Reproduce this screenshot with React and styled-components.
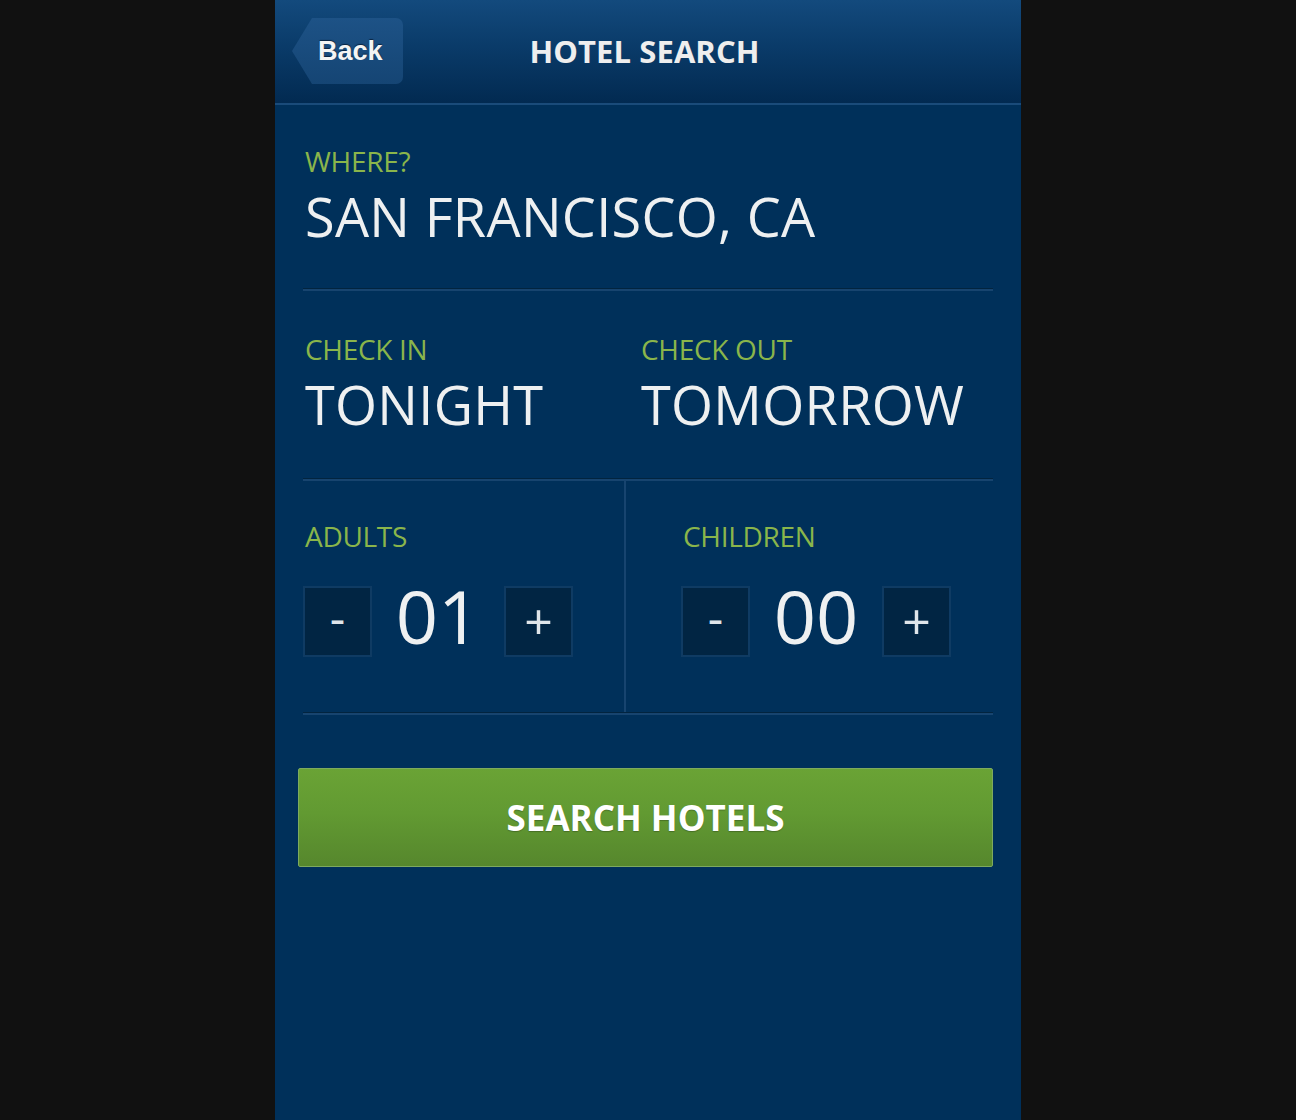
import React, { useState } from "react";
import styled, { createGlobalStyle } from "styled-components";

const GlobalStyle = createGlobalStyle`
  html, body {
    margin: 0;
    padding: 0;
    background: #111111;
  }
  * {
    box-sizing: border-box;
  }
`;

const Page = styled.div`
  display: flex;
  justify-content: center;
  min-height: 1120px;
  background: #111111;
`;

const Phone = styled.div`
  width: 746px;
  min-height: 1120px;
  background: #00305a;
  font-family: "Open Sans", "Noto Sans", sans-serif;
  color: #eef0f1;
`;

const Header = styled.header`
  display: grid;
  grid-template-columns: 1fr auto 1fr;
  align-items: center;
  height: 105px;
  padding: 0 17px 2px;
  background: linear-gradient(to bottom, #134a7d 0%, #0a3b69 45%, #022a51 100%);
  border-bottom: 2px solid #1a4b7a;
`;

const BackButton = styled.button`
  justify-self: start;
  width: 111px;
  height: 66px;
  margin-top: 1px;
  padding: 0 0 0 26px;
  border: none;
  border-radius: 0 7px 7px 0;
  clip-path: polygon(20px 0, 100% 0, 100% 100%, 20px 100%, 0 50%);
  background: linear-gradient(to bottom, #1d5286 0%, #184a7b 60%, #154574 100%);
  color: #f4f4f4;
  font-family: "Liberation Sans", Arial, sans-serif;
  font-weight: bold;
  font-size: 27px;
  text-align: left;
  text-shadow: 0 -1px 1px #0a2440;
  cursor: pointer;
`;

const Title = styled.h1`
  margin: 0 7px 0 0;
  font-size: 31px;
  font-weight: 700;
  letter-spacing: 0.1px;
  color: #eeeeee;
`;

const Content = styled.main`
  padding: 0 28px;
`;

const Section = styled.section`
  padding: ${(p) => p.$pad};
`;

const Divider = styled.hr`
  margin: 0;
  height: 0;
  border: none;
  border-top: 1px solid #02243f;
  border-bottom: 2px solid #17446f;
`;

const Label = styled.div`
  padding-left: 2px;
  font-size: 28px;
  line-height: 34px;
  color: #8ab54b;
  letter-spacing: -0.3px;
`;

const Value = styled.div`
  margin-top: 8px;
  padding-left: 2px;
  font-size: 54px;
  line-height: 60px;
  letter-spacing: 0.3px;
  color: #eef0f1;
  white-space: nowrap;
`;

const DateRow = styled.div`
  display: grid;
  grid-template-columns: 336px 1fr;
`;

const GuestRow = styled.div`
  display: grid;
  grid-template-columns: 323px 1fr;
`;

const GuestColumn = styled.div`
  padding: 38px 0 55px ${(p) => (p.$first ? "0" : "55px")};
  border-right: ${(p) => (p.$first ? "2px solid #17446f" : "none")};
`;

const Counter = styled.div`
  display: flex;
  align-items: flex-start;
  margin-top: 33px;
`;

const StepButton = styled.button`
  display: flex;
  align-items: center;
  justify-content: center;
  width: 69px;
  height: 71px;
  padding: 0 0 ${(p) => p.$shift}px;
  background: #012543;
  border: 2px solid #0f3b63;
  color: #dfe5ea;
  font-family: "Open Sans", "Noto Sans", sans-serif;
  font-size: ${(p) => p.$size}px;
  line-height: 1;
  cursor: pointer;
`;

const Count = styled.div`
  width: 132px;
  text-align: center;
  font-size: 74px;
  line-height: 60px;
  color: #eef0f1;
`;

const SearchButton = styled.button`
  display: flex;
  align-items: center;
  justify-content: center;
  width: 695px;
  height: 99px;
  margin: 53px 0 0 -5px;
  border: 1px solid #7eaa5e;
  border-radius: 2px;
  background: linear-gradient(to bottom, #6aa335 0%, #629a32 45%, #56872d 100%);
  color: #ffffff;
  font-family: "Open Sans", "Noto Sans", sans-serif;
  font-size: 35px;
  font-weight: 700;
  text-shadow: 0 1px 1px rgba(0, 0, 0, 0.25);
  cursor: pointer;
`;

const pad = (n) => String(n).padStart(2, "0");

const GuestCounter = ({ label, value, onChange, first }) => (
  <GuestColumn $first={first}>
    <Label>{label}</Label>
    <Counter>
      <StepButton $size={48} $shift={10} onClick={() => onChange(Math.max(0, value - 1))}>
        -
      </StepButton>
      <Count>{pad(value)}</Count>
      <StepButton $size={50} $shift={2} onClick={() => onChange(value + 1)}>
        +
      </StepButton>
    </Counter>
  </GuestColumn>
);

const App = () => {
  const [adults, setAdults] = useState(1);
  const [children, setChildren] = useState(0);

  return (
    <Page>
      <GlobalStyle />
      <Phone>
        <Header>
          <BackButton>Back</BackButton>
          <Title>HOTEL SEARCH</Title>
          <div />
        </Header>
        <Content>
          <Section $pad="39px 0 42px">
            <Label>WHERE?</Label>
            <Value>SAN FRANCISCO, CA</Value>
          </Section>
          <Divider />
          <Section $pad="41px 0 44px">
            <DateRow>
              <div>
                <Label>CHECK IN</Label>
                <Value>TONIGHT</Value>
              </div>
              <div>
                <Label>CHECK OUT</Label>
                <Value>TOMORROW</Value>
              </div>
            </DateRow>
          </Section>
          <Divider />
          <GuestRow>
            <GuestCounter label="ADULTS" value={adults} onChange={setAdults} first />
            <GuestCounter label="CHILDREN" value={children} onChange={setChildren} />
          </GuestRow>
          <Divider />
          <SearchButton>SEARCH HOTELS</SearchButton>
        </Content>
      </Phone>
    </Page>
  );
};

export default App;
